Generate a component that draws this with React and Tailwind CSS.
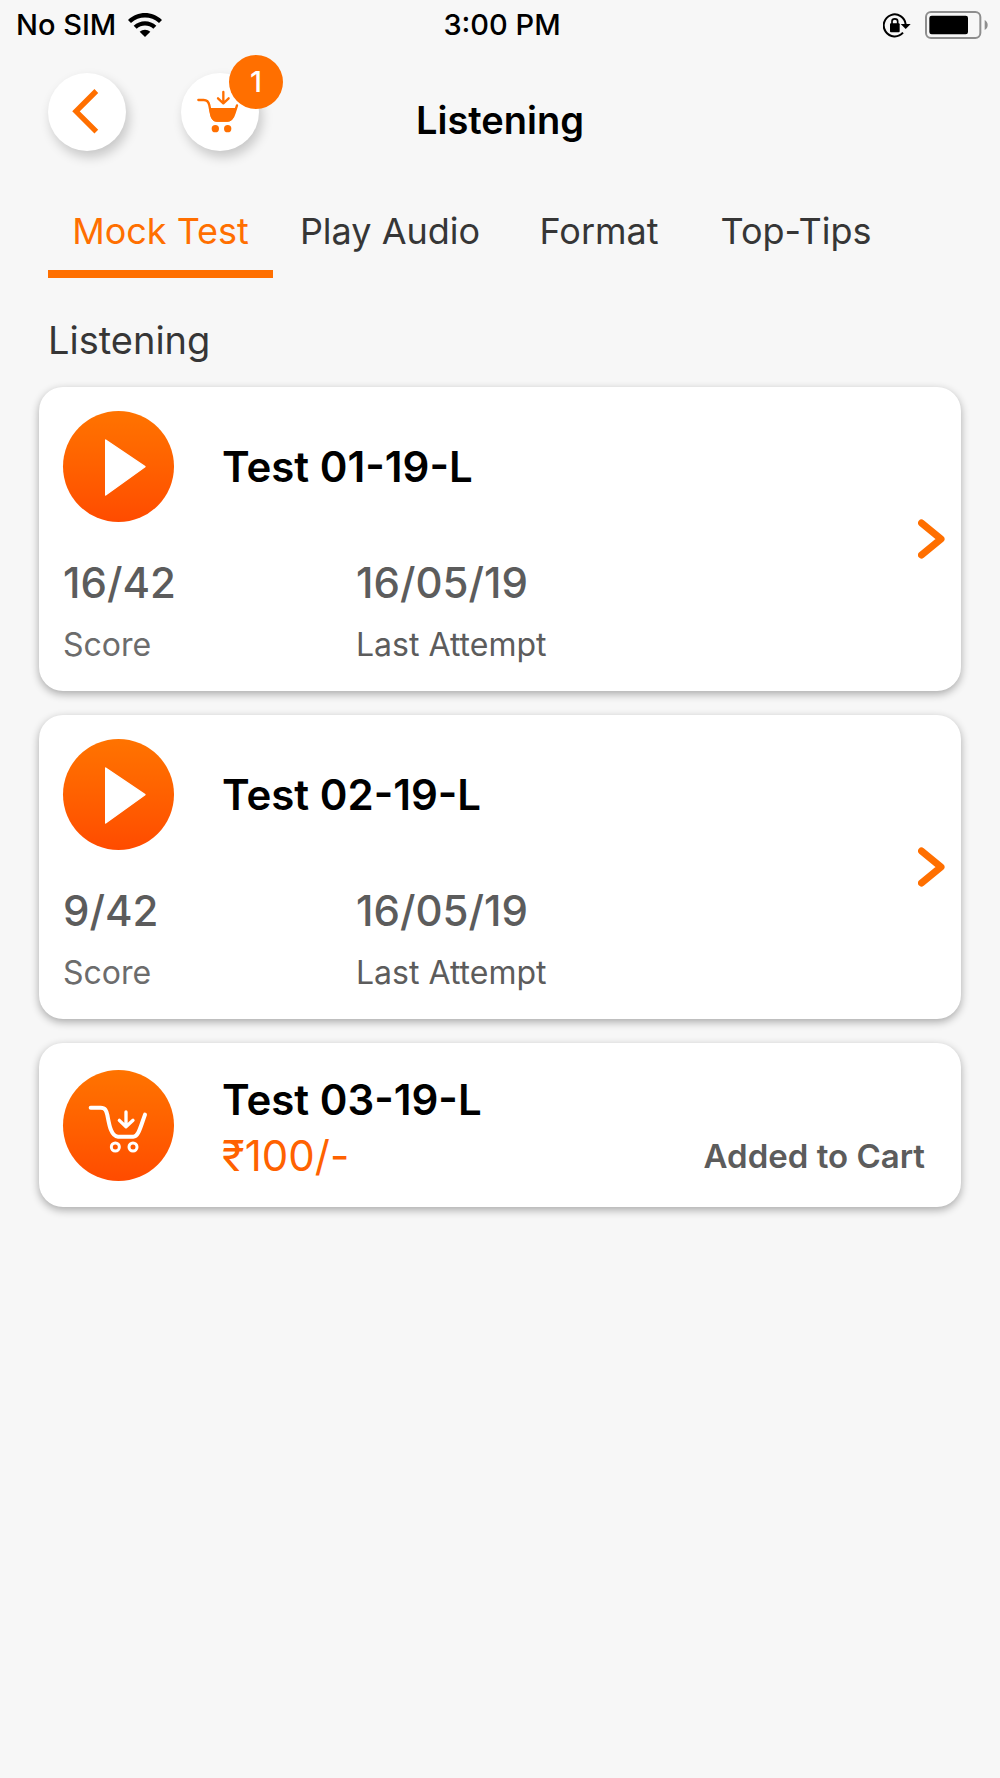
import { useState } from "react";

const tabs = ["Mock Test", "Play Audio", "Format", "Top-Tips"];

const attempted = [
  { title: "Test 01-19-L", score: "16/42", date: "16/05/19" },
  { title: "Test 02-19-L", score: "9/42", date: "16/05/19" },
];

function WifiIcon() {
  return (
    <svg width="34" height="24" viewBox="0 0 102 72" aria-hidden="true">
      <path
        d="M0 21C29-7 73-7 102 21L93 30C69 8 33 8 9 30Z"
        fill="#000"
      />
      <path d="M17 38C36 20 66 20 85 38L76 47C62 34 40 34 26 47Z" fill="#000" />
      <path d="M35 56C44 48 58 48 67 56L51 72Z" fill="#000" />
    </svg>
  );
}

function RotationLockIcon() {
  return (
    <svg width="28" height="25" viewBox="0 0 84 75" aria-hidden="true">
      <path
        d="M60 59A33 33 0 1 1 68 34"
        fill="none"
        stroke="#000"
        strokeWidth="6"
      />
      <path d="M53 33H83L68 48Z" fill="#000" />
      <rect x="21" y="31" width="29" height="27" rx="3" fill="#000" />
      <path
        d="M27 33V25C27 15 44 15 44 25V33"
        fill="none"
        stroke="#000"
        strokeWidth="5"
      />
    </svg>
  );
}

function BatteryIcon() {
  return (
    <svg width="63" height="28" viewBox="0 0 189 84" aria-hidden="true">
      <rect
        x="3"
        y="3"
        width="163"
        height="78"
        rx="15"
        fill="none"
        stroke="#8e8e8e"
        strokeWidth="6"
      />
      <rect x="13" y="14" width="116" height="56" rx="7" fill="#000" />
      <path d="M179 27C191 33 191 51 179 57Z" fill="#8e8e8e" />
    </svg>
  );
}

function CartFilledIcon() {
  return (
    <svg
      className="w-full"
      viewBox="0 0 234 234"
      fill="none"
      stroke="#ff6f00"
      strokeWidth="7"
      strokeLinecap="round"
      strokeLinejoin="round"
      aria-hidden="true"
    >
      <path d="M52 81H68C80 81 83 87 85 97L89 118C92 137 98 143 108 143H138C151 143 157 133 161 119L168 97" />
      <path
        d="M85 105H166C160 127 155 146 140 146H107C92 146 87 130 85 105Z"
        fill="#ff6f00"
        stroke="none"
      />
      <path d="M127 57V90M111 76L127 91L143 76" />
      <circle cx="103" cy="167" r="11" fill="#ff6f00" stroke="none" />
      <circle cx="140" cy="167" r="11" fill="#ff6f00" stroke="none" />
    </svg>
  );
}

function CartIcon() {
  return (
    <svg
      className="w-full"
      viewBox="0 0 333 333"
      fill="none"
      stroke="#fff"
      strokeWidth="12"
      strokeLinecap="round"
      strokeLinejoin="round"
      aria-hidden="true"
    >
      <path d="M83 113H113C127 113 130 122 133 135C138 160 143 199 165 200H211C226 200 231 175 246 134" />
      <path d="M189 126V169M169 151L189 170L210 151" strokeWidth="10" />
      <circle cx="157" cy="231" r="12" strokeWidth="9" />
      <circle cx="210" cy="231" r="12" strokeWidth="9" />
    </svg>
  );
}

function TestCard({ title, score, date }) {
  return (
    <article className="flex items-center justify-between rounded-3xl bg-white pl-6 pr-4 shadow-[0_3px_8px_rgba(0,0,0,0.32)]">
      <div className="pt-6 pb-4">
        <div className="flex items-center gap-12">
          <button
            aria-label={`Play ${title}`}
            className="size-[111px] shrink-0 rounded-full bg-linear-to-b from-[#ff7300] to-[#ff4b00]"
          >
            <svg className="w-full" viewBox="0 0 333 333" aria-hidden="true">
              <path
                d="M128 87L246 167L128 252Z"
                fill="#fff"
                stroke="#fff"
                strokeWidth="4"
                strokeLinejoin="round"
              />
            </svg>
          </button>
          <h3 className="text-[42px] font-semibold text-black">{title}</h3>
        </div>
        <dl className="mt-[29px] grid grid-cols-[293px_auto] text-[#5c5c5c]">
          <div className="flex flex-col-reverse">
            <dt className="text-[32px] leading-[60px] text-[#6c6c6c]">Score</dt>
            <dd className="text-[42px] leading-16 font-medium">{score}</dd>
          </div>
          <div className="flex flex-col-reverse">
            <dt className="text-[32px] leading-[60px]">Last Attempt</dt>
            <dd className="text-[42px] leading-16 font-medium">{date}</dd>
          </div>
        </dl>
      </div>
      <button aria-label={`Open ${title}`}>
        <svg width="27" height="40" viewBox="0 0 27 40" aria-hidden="true">
          <path
            d="M3.5 4L23 20L3.5 36"
            fill="none"
            stroke="#ff6f00"
            strokeWidth="7"
            strokeLinecap="round"
            strokeLinejoin="round"
          />
        </svg>
      </button>
    </article>
  );
}

export default function App() {
  const [activeTab, setActiveTab] = useState(0);

  return (
    <div className="min-h-screen bg-[#f7f7f7] font-['Inter',sans-serif]">
      <div className="grid h-[50px] grid-cols-[1fr_auto_1fr] items-center pl-4 pr-3 text-[29px] font-medium text-black">
        <div className="flex items-center gap-3">
          <span>No SIM</span>
          <WifiIcon />
        </div>
        <span>3:00 PM</span>
        <div className="flex items-center justify-end gap-3.5">
          <RotationLockIcon />
          <BatteryIcon />
        </div>
      </div>

      <header className="grid grid-cols-[1fr_auto_1fr] px-12 pt-[23px]">
        <div className="flex items-start gap-[55px]">
          <button
            aria-label="Back"
            className="size-[78px] rounded-full bg-white shadow-[3px_6px_12px_rgba(0,0,0,0.2)]"
          >
            <svg className="w-full" viewBox="0 0 234 234" aria-hidden="true">
              <path
                d="M145 54L84 115L145 176"
                fill="none"
                stroke="#ff6f00"
                strokeWidth="16"
              />
            </svg>
          </button>
          <button
            aria-label="Cart"
            className="relative size-[78px] rounded-full bg-white shadow-[3px_6px_12px_rgba(0,0,0,0.2)]"
          >
            <CartFilledIcon />
            <span className="absolute -top-[18px] -right-6 flex size-[54px] items-center justify-center rounded-full bg-[#ff6f00] text-[29px] font-medium text-white">
              1
            </span>
          </button>
        </div>
        <h1 className="text-[38px] leading-[94px] font-semibold text-black">
          Listening
        </h1>
      </header>

      <nav className="mt-[26px] grid grid-cols-[225px_234px_184px_210px] px-12">
        {tabs.map((tab, index) => (
          <button
            key={tab}
            onClick={() => setActiveTab(index)}
            className={`border-b-8 text-[36px] leading-[77px] whitespace-nowrap ${
              activeTab === index
                ? "border-[#ff6f00] text-[#ff6f00]"
                : "border-transparent text-[#363636]"
            }`}
          >
            {tab}
          </button>
        ))}
      </nav>

      <main className="px-[39px]">
        <h2 className="px-[9px] pt-8 pb-[17px] text-[38px] leading-[60px] text-[#363636]">
          Listening
        </h2>
        <div className="flex flex-col gap-6">
          {attempted.map((test) => (
            <TestCard key={test.title} {...test} />
          ))}

          <article className="flex items-center rounded-3xl bg-white py-[23px] pl-6 pr-9 shadow-[0_3px_8px_rgba(0,0,0,0.32)]">
            <button
              aria-label="View cart"
              className="size-[111px] shrink-0 rounded-full bg-linear-to-b from-[#ff7300] to-[#ff4b00]"
            >
              <CartIcon />
            </button>
            <div className="ml-12 flex grow items-end justify-between pt-1.5">
              <div>
                <h3 className="text-[42px] leading-14 font-semibold text-black">
                  Test 03-19-L
                </h3>
                <p className="text-[42px] leading-14 text-[#ff6200]">₹100/-</p>
              </div>
              <p className="text-[33px] leading-14 font-semibold text-[#5c5c5c]">
                Added to Cart
              </p>
            </div>
          </article>
        </div>
      </main>
    </div>
  );
}
